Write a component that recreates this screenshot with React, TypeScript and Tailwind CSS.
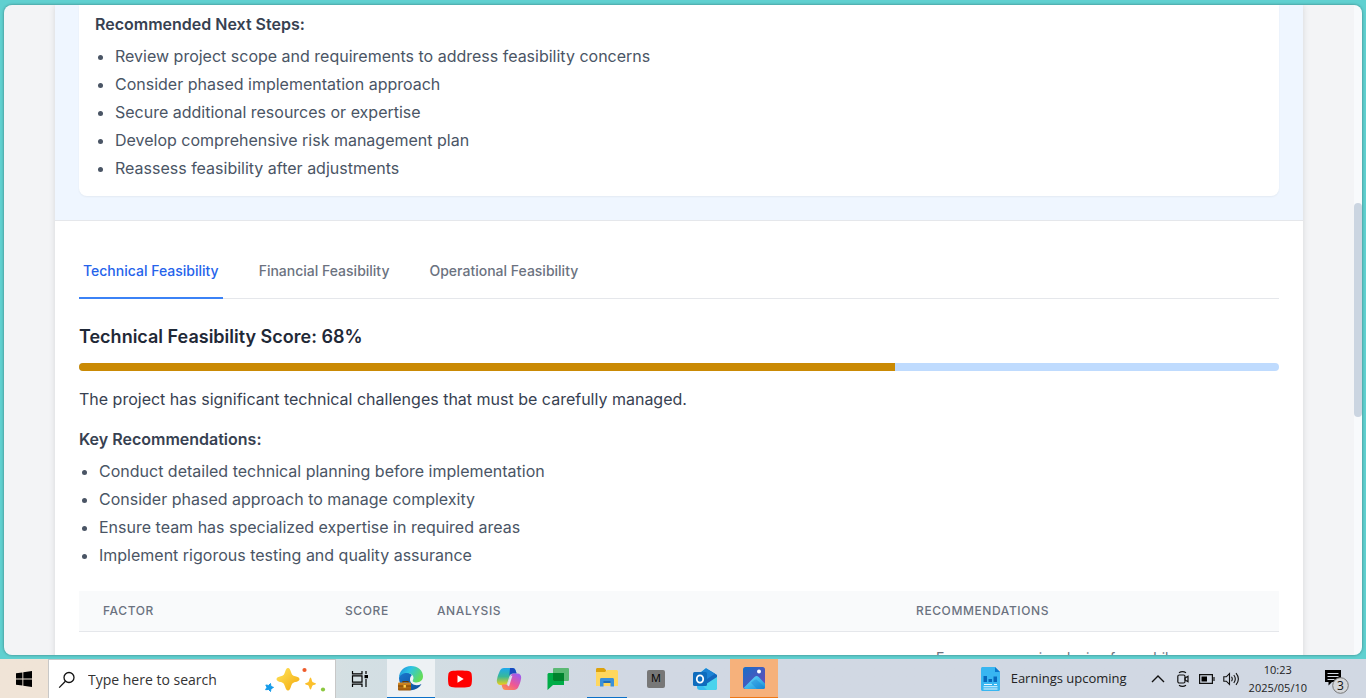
import { useState, type ReactNode } from "react";

const nextSteps = [
  "Review project scope and requirements to address feasibility concerns",
  "Consider phased implementation approach",
  "Secure additional resources or expertise",
  "Develop comprehensive risk management plan",
  "Reassess feasibility after adjustments",
];

const recommendations = [
  "Conduct detailed technical planning before implementation",
  "Consider phased approach to manage complexity",
  "Ensure team has specialized expertise in required areas",
  "Implement rigorous testing and quality assurance",
];

const tabs = ["Technical Feasibility", "Financial Feasibility", "Operational Feasibility"];

function BulletList({ items }: { items: string[] }) {
  return (
    <ul className="mt-2 list-disc space-y-1 pl-5 text-gray-600">
      {items.map((item) => (
        <li key={item}>{item}</li>
      ))}
    </ul>
  );
}

function Tabs() {
  const [active, setActive] = useState(0);
  return (
    <div className="border-b border-gray-200">
      <nav className="-mb-px flex gap-8" aria-label="Feasibility">
        {tabs.map((tab, i) => (
          <button
            key={tab}
            type="button"
            onClick={() => setActive(i)}
            className={
              i === active
                ? "border-b-2 border-[#3b82f6] px-1 py-4 text-sm font-medium text-[#2563eb]"
                : "border-b-2 border-transparent px-1 py-4 text-sm font-medium text-[#6b7280]"
            }
          >
            {tab}
          </button>
        ))}
      </nav>
    </div>
  );
}

function FactorTable() {
  return (
    <table className="mt-6 w-full table-fixed text-left">
      <thead className="border-b border-gray-200 bg-[#f9fafb] text-xs tracking-wider text-[#6b7280] uppercase">
        <tr>
          <th scope="col" className="w-[242px] px-6 py-3 font-medium">Factor</th>
          <th scope="col" className="w-[92px] px-6 py-3 font-medium">Score</th>
          <th scope="col" className="w-[479px] px-6 py-3 font-medium">Analysis</th>
          <th scope="col" className="px-6 py-3 font-medium">Recommendations</th>
        </tr>
      </thead>
      <tbody>
        <tr>
          <td />
          <td />
          <td />
          <td className="px-6 py-4 text-sm text-[#6b7280]">
            <ul className="list-disc pl-5">
              <li>Ensure responsive design for mobile</li>
            </ul>
          </td>
        </tr>
      </tbody>
    </table>
  );
}

function Report() {
  return (
    <main className="h-full min-w-0 flex-1 overflow-hidden bg-[#f3f4f6] font-[Inter,sans-serif]">
      <div className="mx-auto max-w-7xl px-4">
        <div className="min-h-screen bg-white shadow-[0_0_6px_rgba(0,0,0,0.12)]">
          <section className="border-b border-gray-200 bg-[#eff6ff] px-6 pb-6">
            <div className="rounded-b-lg bg-white px-4 pt-[7px] pb-4 shadow-xs">
              <h3 className="font-semibold text-[#374151]">Recommended Next Steps:</h3>
              <BulletList items={nextSteps} />
            </div>
          </section>
          <section className="p-6">
            <Tabs />
            <h2 className="mt-6 text-lg font-semibold text-[#1f2937]">Technical Feasibility Score: 68%</h2>
            <div
              role="progressbar"
              aria-valuenow={68}
              aria-valuemin={0}
              aria-valuemax={100}
              className="mt-3 h-2 overflow-hidden rounded-full bg-[#bfdbfe]"
            >
              <div className="h-full w-[68%] bg-[#ca8a04]" />
            </div>
            <p className="mt-4 text-[#374151]">
              The project has significant technical challenges that must be carefully managed.
            </p>
            <h3 className="mt-4 font-semibold text-[#374151]">Key Recommendations:</h3>
            <BulletList items={recommendations} />
            <FactorTable />
          </section>
        </div>
      </div>
    </main>
  );
}

function TaskButton({ label, tone = "", children }: { label: string; tone?: string; children: ReactNode }) {
  return (
    <button type="button" aria-label={label} className={`flex h-full w-12 items-center justify-center ${tone}`}>
      {children}
    </button>
  );
}

function WindowsIcon() {
  return (
    <svg width="16" height="16" viewBox="0 0 16 16">
      <path d="M0 2.3 6.4 1.4V7.5H0zM7.3 1.2 16 0v7.5H7.3zM0 8.4h6.4v6.2L0 13.7zM7.3 8.4H16V16l-8.7-1.2z" />
    </svg>
  );
}

function SearchIcon() {
  return (
    <svg width="18" height="18" viewBox="0 0 18 18" fill="none" stroke="#111" strokeWidth="1.3">
      <circle cx="11" cy="6.5" r="5" />
      <path d="M7.4 10.2 1.2 16.6" />
    </svg>
  );
}

function SparklesIcon() {
  return (
    <svg width="62" height="26" viewBox="0 0 62 26">
      <defs>
        <linearGradient id="gold" x1="0" y1="0" x2="1" y2="1">
          <stop offset="0" stopColor="#ffe55c" />
          <stop offset="1" stopColor="#f3a90c" />
        </linearGradient>
      </defs>
      <path
        d="M24 1c1.6 0 2.3 1.8 3 4 1 3 1.4 3.300 4.300 4.300 2.200.7 4.200 1.300 4.200 2.900s-2 2.200-4.200 2.900c-2.900 1-3.300 1.600-4.300 4.400-.7 2.200-1.400 4-3 4s-2.300-1.800-3-4c-1-2.800-1.400-3.400-4.300-4.400-2.200-.7-4.200-1.300-4.200-2.900s2-2.200 4.200-2.900c2.900-1 3.300-1.300 4.300-4.300.7-2.200 1.400-4 3-4z"
        fill="url(#gold)"
      />
      <path d="M46.500 10.500c1 0 1.300 4 2.300 4.700 1 .6 3.200.6 3.200 1.500s-2.200 1-3.200 1.600c-1 .7-1.300 4.200-2.300 4.200s-1.300-3.500-2.300-4.200c-1-.6-3.200-.7-3.200-1.600s2.200-.9 3.200-1.500c1-.7 1.300-4.700 2.300-4.700z" fill="#fbc02d" />
      <path d="m6.500 16.500.4 2.900 2.600 1-2.500 1.300-.5 2.800-2-2-2.900.2 1.400-2.500L1.800 18l2.800.4z" fill="#159bea" stroke="#159bea" strokeLinejoin="round" />
      <circle cx="40.500" cy="3" r="2.100" fill="#ee5b2b" />
      <circle cx="59" cy="22.500" r="2.100" fill="#8bc73f" />
    </svg>
  );
}

function TaskViewIcon() {
  return (
    <svg width="18" height="16" viewBox="0 0 18 16" fill="none" stroke="#000" strokeWidth="1.200">
      <path d="M1.500 0v2.800h9.500V0M1.500 16v-2.800h9.500V16M1.500 4.800h9.500v6.400H1.500zM15 0v3M15 8v8" />
      <path d="M13.500 4H17v3.200h-3.500z" fill="#000" stroke="none" />
    </svg>
  );
}

function EdgeIcon() {
  return (
    <svg width="26" height="26" viewBox="0 0 26 26">
      <defs>
        <linearGradient id="edge-top" x1="0" y1="0" x2="1" y2=".5">
          <stop offset="0" stopColor="#2087d9" />
          <stop offset=".45" stopColor="#2dc4e4" />
          <stop offset="1" stopColor="#63dc5a" />
        </linearGradient>
        <linearGradient id="edge-low" x1="0" y1="0" x2="1" y2="1">
          <stop offset="0" stopColor="#1b78cd" />
          <stop offset="1" stopColor="#0c4f9c" />
        </linearGradient>
        <linearGradient id="case" x1="0" y1="0" x2="0" y2="1">
          <stop offset="0" stopColor="#d68a22" />
          <stop offset="1" stopColor="#98550a" />
        </linearGradient>
      </defs>
      <path d="M1 13a12 12 0 0 0 18 10.400c2-1.100 3.500-2.600 4.500-4.400-6 3-12 0-11.500-5 0-2 1-3 2-4C9 6 2 7 1 13z" fill="url(#edge-low)" />
      <path d="M1 13C1 6 6 1 13 1c7 0 12 4.500 12 10.300 0 4-3 6.200-6.500 6.200-3 0-4.500-1-3.500-2.500C17 11 13 8 9 8c-4 0-7 2-8 5z" fill="url(#edge-top)" />
      <path d="M5 18v-1.500h5V18" fill="none" stroke="#5f3708" strokeWidth="1.200" />
      <rect x="0" y="17.500" width="13" height="8" rx="1" fill="url(#case)" />
      <path d="M0 21h13" stroke="#754006" />
      <rect x="5.500" y="20" width="2.400" height="2.600" fill="#ffd34c" />
    </svg>
  );
}

function YoutubeIcon() {
  return (
    <svg width="24" height="18" viewBox="0 0 24 18">
      <path d="M3.500.9C7 .2 17 .2 20.500.9 22.500 1.300 23.400 2.600 23.600 4c.5 3 .5 7 0 10-.3 1.600-1.300 2.700-3.100 3-4 .8-13 .8-17 0C1.600 16.600.6 15.500.4 14-.1 11-.1 7 .4 4 .6 2.500 1.600 1.300 3.500.9z" fill="#f00" />
      <path d="m9.500 5.200 6.200 3.800-6.200 3.800z" fill="#fff" />
    </svg>
  );
}

function CopilotIcon() {
  return (
    <svg width="26" height="24" viewBox="0 0 26 24">
      <defs>
        <linearGradient id="cop-left" x1="0" y1="0" x2="0" y2="1">
          <stop offset="0" stopColor="#1ca8ee" />
          <stop offset=".5" stopColor="#38b89a" />
          <stop offset="1" stopColor="#f1d014" />
        </linearGradient>
        <linearGradient id="cop-right" x1=".7" y1="0" x2="0" y2="1">
          <stop offset="0" stopColor="#a45be9" />
          <stop offset=".5" stopColor="#ef5793" />
          <stop offset="1" stopColor="#ff9a43" />
        </linearGradient>
      </defs>
      <path d="M8 1h8.500c2 0 2.700 1.200 3.300 3l.8 2.500H17c-2.200 0-3 1-3.700 3.200l-1.900 5.800c-.7 2-1.500 2.500-3.400 2.500H4.500C1.500 18 .4 15.500 1 12.500c.6-3.600 1.700-6 2.800-8.500C4.800 2 6 1 8 1z" fill="url(#cop-left)" />
      <path d="M14 1h2.500c2 0 2.700 1.200 3.300 3l.8 2.500H17c-2 0-3 .8-3.700 2.900z" fill="#1749bf" />
      <path d="M18 23H9.500c-2 0-2.700-1.200-3.300-3L5.500 17.600H9c2.200 0 3-1 3.700-3.200l1.900-5.500c.7-2 1.500-2.500 3.400-2.500h3.500c3 0 4.100 2.500 3.500 5.500-.6 3.600-1.700 6-2.800 8.400C21.200 22 20 23 18 23z" fill="url(#cop-right)" />
      <path d="m11 18 3.700-9.200h1.700L13 19.500z" fill="#dbe4ef" />
    </svg>
  );
}

function ChatIcon() {
  return (
    <svg width="24" height="24" viewBox="0 0 24 24">
      <path d="M2.500 6H18v12H7l-5.500 5V7z" fill="#00ac47" />
      <rect x="7" y="1" width="16" height="13" rx="1" fill="#5bb974" />
      <path d="M7 6h11v8H8a1 1 0 0 1-1-1z" fill="#00832d" />
    </svg>
  );
}

function FolderIcon() {
  return (
    <svg width="24" height="22" viewBox="0 0 24 22">
      <path d="M1 2.500C1 1.500 1.500 1 2.500 1H9l2 2v3H1z" fill="#dda20d" />
      <path d="M1 5h9l2-2h9.500c.8 0 1.500.7 1.500 1.500V19H1z" fill="#ffd75e" />
      <path d="M5 19.500v-7c0-1 .6-1.500 1.500-1.500h11c.9 0 1.500.6 1.500 1.500v7h-3.500V16h-7v3.500z" fill="#3b90d9" />
      <path d="M8.500 14h7v2h-7z" fill="#1f6db4" />
    </svg>
  );
}

function OutlookIcon() {
  return (
    <svg width="26" height="24" viewBox="0 0 26 24">
      <path d="m5 8 9-7 11 7v13c0 1.200-.8 2-2 2H8c-2 0-3-1-3-3z" fill="#38bdf2" />
      <path d="M6 8 14 1.500 25 8v3l-11 7-8-5z" fill="#1467bd" />
      <path d="m14 1.500 9 5.300L12 14 6 8z" fill="#1d83d5" />
      <path d="m25 10-14 9 4 4h8c1.200 0 2-.8 2-2z" fill="#49d3ed" />
      <rect x="1" y="5" width="14" height="14" rx="1.500" fill="#0f6cbd" />
      <ellipse cx="8" cy="12" rx="3.200" ry="3.700" fill="none" stroke="#fff" strokeWidth="1.800" />
    </svg>
  );
}

function PhotosIcon() {
  return (
    <svg width="22" height="22" viewBox="0 0 22 22">
      <defs>
        <linearGradient id="sky" x1="0" y1="0" x2="1" y2="1">
          <stop offset="0" stopColor="#176fc8" />
          <stop offset="1" stopColor="#7048b7" />
        </linearGradient>
        <linearGradient id="hill" x1="0" y1="0" x2="1" y2="1">
          <stop offset="0" stopColor="#6ee0ff" />
          <stop offset="1" stopColor="#168fd8" />
        </linearGradient>
      </defs>
      <rect width="22" height="22" rx="2.500" fill="url(#sky)" />
      <path d="M.8 20.800 11.500 10c1.500-1.500 2.800-1.500 4.200 0l6.300 6.500V20c0 1.200-.8 2-2 2H2.500c-.7 0-1.300-.5-1.700-1.200z" fill="url(#hill)" />
      <path d="m13.500 12.500 8.500 8c-.3 1-1 1.500-2 1.500h-6L8 15.800c2-2 3.500-3.300 5.500-3.300z" fill="#1778ce" opacity=".35" />
      <circle cx="16" cy="4.500" r="2" fill="#fff" />
    </svg>
  );
}

function NewsIcon() {
  return (
    <svg width="20" height="24" viewBox="0 0 20 24">
      <path d="M1.500 0H14l5 5v17.500c0 .8-.7 1.500-1.500 1.500h-16C.7 24 0 23.300 0 22.500v-21C0 .7.7 0 1.500 0z" fill="#38b6f1" />
      <path d="m14 0 5 5h-5z" fill="#0b78cb" />
      <path d="M2.500 9h3.500v6H2.500zM7.500 12h3.500v3H7.500zM12.500 9.500H16V15h-3.500z" fill="#0868bb" />
      <path d="M3 17.500h8M13 17.500h3M2.500 19.800h14M2.500 22h14" stroke="#e8f8ff" strokeWidth="1.100" />
    </svg>
  );
}

function MeetIcon() {
  return (
    <svg width="12" height="16" viewBox="0 0 12 16" fill="none" stroke="#111" strokeWidth="1.200">
      <path d="M2 1.800Q5.500-.5 9 1.800M2 14.200q3.500 2.300 7 0" />
      <rect x=".8" y="4" width="7.200" height="8" rx="1.500" />
      <path d="m8 7 3-1.800v5.600L8 9z" />
    </svg>
  );
}

function BatteryIcon() {
  return (
    <svg width="16" height="10" viewBox="0 0 16 10" fill="none" stroke="#111" strokeWidth="1.200">
      <path d="M.6.6h12.800v8.800H.6zM15 3v4" />
      <path d="M2.500 2.500H8v5H2.500z" fill="#000" stroke="none" />
    </svg>
  );
}

function SpeakerIcon() {
  return (
    <svg width="17" height="14" viewBox="0 0 17 14" fill="none" stroke="#111" strokeWidth="1.100">
      <path d="M.8 4.800h2.500L6.500 1.500v11L3.300 9.200H.8zM8.500 4.800q1.600 2.200 0 4.400M10.800 3q3 4 0 8M13 1.200q4.800 5.800 0 11.600" />
    </svg>
  );
}

function NotificationIcon() {
  return (
    <svg width="25" height="26" viewBox="0 0 25 26">
      <path d="M0 2h16v12H7l-3.500 3.500V14H0z" fill="#000" />
      <path d="M2.500 5.500h11M2.500 8.500h11M2.500 11.500h7" stroke="#d2d9e3" strokeWidth="1.200" />
      <circle cx="15.500" cy="17.500" r="7.800" fill="#d5d7da" stroke="#777" />
      <text x="15.500" y="22" textAnchor="middle" fontSize="12" fill="#111">3</text>
    </svg>
  );
}

function Taskbar() {
  return (
    <footer className="flex h-[39px] shrink-0 items-center bg-linear-to-r from-[#f0e4d7] from-4% via-[#d3dfe3] via-26% to-[#d1d8e3] to-45% font-['Open_Sans',sans-serif] text-[#222]">
      <TaskButton label="Start">
        <WindowsIcon />
      </TaskButton>
      <label className="flex h-full w-[288px] items-center gap-3 border border-b-0 border-[#c8c8c8] bg-white px-[9px] pt-px">
        <SearchIcon />
        <input
          type="text"
          aria-label="Search"
          placeholder="Type here to search"
          className="min-w-0 flex-1 text-sm outline-none placeholder:text-[#333]"
        />
        <SparklesIcon />
      </label>
      <TaskButton label="Task view">
        <TaskViewIcon />
      </TaskButton>
      <div className="ml-[3px] flex h-full gap-px">
        <TaskButton label="Edge" tone="bg-[#edf1f4] border-b border-[#0b70c8]">
          <EdgeIcon />
        </TaskButton>
        <TaskButton label="YouTube">
          <YoutubeIcon />
        </TaskButton>
        <TaskButton label="Copilot">
          <CopilotIcon />
        </TaskButton>
        <TaskButton label="Chat">
          <ChatIcon />
        </TaskButton>
        <button type="button" aria-label="File Explorer" className="flex h-full w-12 justify-center">
          <span className="flex h-full w-10 items-center justify-center border-b border-[#0b70c8]">
            <FolderIcon />
          </span>
        </button>
        <TaskButton label="M">
          <span className="flex size-[18px] items-center justify-center rounded-xs bg-[#777] text-[11px] text-black">M</span>
        </TaskButton>
        <TaskButton label="Outlook">
          <OutlookIcon />
        </TaskButton>
        <TaskButton label="Photos" tone="bg-[#f6b17b] border-b border-[#ee7817]">
          <PhotosIcon />
        </TaskButton>
      </div>
      <div className="ml-auto flex h-full items-center pt-px pr-4">
        <button type="button" className="flex items-center gap-[10px] text-[13px]">
          <NewsIcon />
          Earnings upcoming
        </button>
        <button type="button" aria-label="Show hidden icons" className="ml-6">
          <svg width="14" height="8" viewBox="0 0 14 8" fill="none" stroke="#111" strokeWidth="1.400">
            <path d="m1 7 6-6 6 6" />
          </svg>
        </button>
        <div className="ml-3 flex items-center gap-2">
          <MeetIcon />
          <span className="ml-0.5"><BatteryIcon /></span>
          <SpeakerIcon />
        </div>
        <div className="ml-[9px] text-center text-[11px] leading-[18px]">
          <div>10:23</div>
          <div>2025/05/10</div>
        </div>
        <button type="button" aria-label="Notifications" className="ml-[18px] pt-1">
          <NotificationIcon />
        </button>
      </div>
    </footer>
  );
}

export default function App() {
  return (
    <div className="flex h-screen flex-col overflow-hidden bg-[#60d0d0]">
      <div className="min-h-0 flex-1 px-1 pt-[5px] pb-1">
        <div className="flex h-full overflow-hidden rounded-lg shadow-[0_0_3px_rgba(0,0,0,0.4)]">
          <Report />
          <div className="w-2 shrink-0 bg-[#f8fafc] pt-[198px]">
            <div className="h-[214px] rounded-full bg-[#cbd5e1]" />
          </div>
        </div>
      </div>
      <Taskbar />
    </div>
  );
}
